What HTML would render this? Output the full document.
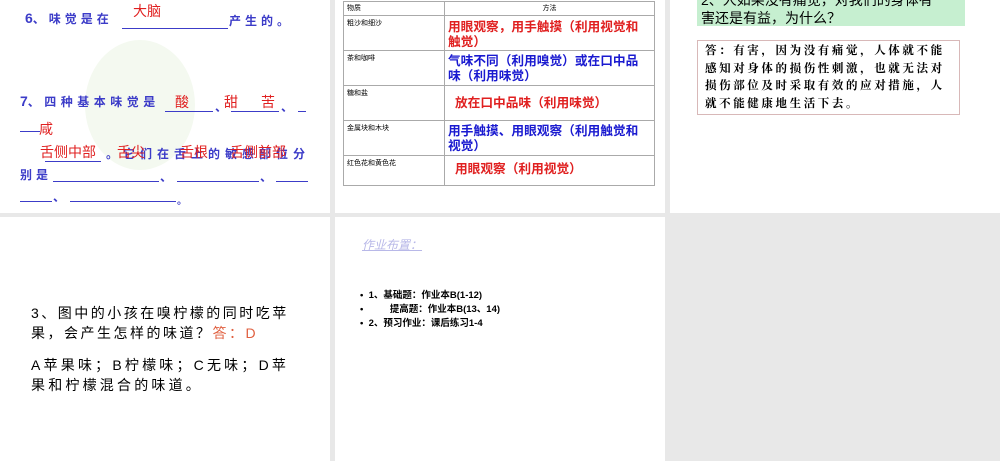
<!DOCTYPE html>
<html><head><meta charset="utf-8"><style>
body{margin:0;width:1000px;height:461px;background:#e8e8e8;position:relative;overflow:hidden;font-family:"Liberation Sans","Noto Sans CJK SC",sans-serif}
.s{position:absolute;background:#fff;overflow:hidden}
.a{position:absolute;white-space:nowrap}
.b{color:#3c3cc8;font-weight:bold;letter-spacing:4px}.r{color:#e02020}
.u{position:absolute;height:1px;background:#3c3cc8}
table{border-collapse:collapse;position:absolute;left:8px;top:1px;width:312px;font-size:7px;table-layout:fixed}
td{border:1px solid #aaa;vertical-align:top;padding:2px 3px;overflow:hidden}
td.m{font-size:12.7px;font-weight:bold;line-height:15px;padding:3px 10px 0 3px}
</style></head><body>
<div class="s" style="left:0;top:0;width:330px;height:213px">
 <div style="position:absolute;left:85px;top:40px;width:110px;height:130px;border-radius:50%;background:#f4f9f0"></div>
 <div class="a b" style="left:25px;top:10px;font-size:14px;letter-spacing:0">6<span style="font-size:12px;letter-spacing:4px">、味觉是在</span></div>
 <div class="u" style="left:122px;top:28px;width:106px"></div>
 <div class="a b" style="left:229px;top:12px;font-size:12px">产生的。</div>
 <div class="a r" style="left:133px;top:1px;font-size:14px">大脑</div>
 <div class="a b" style="left:20px;top:93px;font-size:14px;letter-spacing:0">7<span style="font-size:12px;letter-spacing:4.5px">、四种基本味觉是</span></div>
 <div class="u" style="left:165px;top:111px;width:48px"></div><div class="a b" style="left:215px;top:98px;font-size:12px">、</div>
 <div class="u" style="left:231px;top:111px;width:48px"></div><div class="a b" style="left:281px;top:98px;font-size:12px">、</div>
 <div class="u" style="left:298px;top:111px;width:8px"></div>
 <div class="u" style="left:20px;top:131px;width:20px"></div>
 <div class="a r" style="left:175px;top:92px;font-size:14px">酸</div>
 <div class="a r" style="left:224px;top:92px;font-size:14px">甜</div>
 <div class="a r" style="left:261px;top:92px;font-size:14px">苦</div>
 <div class="a r" style="left:39px;top:119px;font-size:14px">咸</div>
 <div class="a b" style="left:106px;top:145px;font-size:12px;letter-spacing:5px">。它们在舌上的敏感部位分</div>
 <div class="u" style="left:45px;top:161px;width:56px"></div>
 <div class="a r" style="left:40px;top:142px;font-size:14px">舌侧中部</div>
 <div class="a r" style="left:117px;top:142px;font-size:14px">舌尖</div>
 <div class="a r" style="left:180px;top:142px;font-size:14px">舌根</div>
 <div class="a r" style="left:230px;top:142px;font-size:14px">舌侧前部</div>
 <div class="a b" style="left:20px;top:166px;font-size:12px">别是</div>
 <div class="u" style="left:53px;top:181px;width:106px"></div><div class="a b" style="left:160px;top:168px;font-size:12px">、</div>
 <div class="u" style="left:177px;top:181px;width:82px"></div><div class="a b" style="left:260px;top:168px;font-size:12px">、</div>
 <div class="u" style="left:276px;top:181px;width:32px"></div>
 <div class="u" style="left:20px;top:201px;width:32px"></div><div class="a b" style="left:53px;top:188px;font-size:12px">、</div>
 <div class="u" style="left:70px;top:201px;width:106px"></div><div class="a b" style="left:177px;top:192px;font-size:10px">。</div>
</div>
<div class="s" style="left:335px;top:0;width:330px;height:213px">
<table>
<colgroup><col style="width:101px"><col></colgroup>
<tr><td style="height:11px;padding:1px 3px">物质</td><td style="height:11px;padding:1px 3px;text-align:center">方法</td></tr>
<tr><td style="height:28px">粗沙和细沙</td><td class="m r" style="height:30px;padding-top:4px">用眼观察，用手触摸（利用视觉和触觉）</td></tr>
<tr><td>茶和咖啡</td><td class="m" style="color:#1a1ad0;height:31px">气味不同（利用嗅觉）或在口中品味（利用味觉）</td></tr>
<tr><td>糖和盐</td><td class="m r" style="padding-left:10px;padding-top:10px;height:24px">放在口中品味（利用味觉）</td></tr>
<tr><td>金属块和木块</td><td class="m" style="color:#1a1ad0;height:31px">用手触摸、用眼观察（利用触觉和视觉）</td></tr>
<tr><td>红色花和黄色花</td><td class="m r" style="padding-left:10px;padding-top:6px;height:23px">用眼观察（利用视觉）</td></tr>
</table>
</div>
<div class="s" style="left:670px;top:0;width:330px;height:213px">
 <div style="position:absolute;left:27px;top:-3px;width:268px;height:29px;background:#c6efd0"></div>
 <div class="a" style="left:31px;top:-9px;font-size:14px;line-height:18px">2、人如果没有痛觉，对我们的身体有<br>害还是有益，为什么？</div>
 <div style="position:absolute;left:27px;top:40px;width:261px;height:73px;border:1px solid #d8b8b8"></div>
 <div class="a" style="left:35px;top:43px;font-size:11.5px;line-height:17.5px;letter-spacing:2.6px;font-weight:bold;font-family:'Liberation Serif','Noto Serif CJK SC',serif">答：有害，因为没有痛觉，人体就不能<br>感知对身体的损伤性刺激，也就无法对<br>损伤部位及时采取有效的应对措施，人<br>就不能健康地生活下去。</div>
</div>
<div class="s" style="left:0;top:217px;width:330px;height:244px">
 <div class="a" style="left:31px;top:86px;font-size:14px;line-height:20px;letter-spacing:2.5px">3、图中的小孩在嗅柠檬的同时吃苹<br>果，会产生怎样的味道？<span style="color:#e06040">答：D</span></div>
 <div class="a" style="left:31px;top:138px;font-size:14px;line-height:20px;letter-spacing:3.2px">A苹果味；B柠檬味；C无味；D苹<br>果和柠檬混合的味道。</div>
</div>
<div class="s" style="left:335px;top:217px;width:330px;height:244px">
 <div class="a" style="left:27px;top:19px;font-size:12px;color:#b8b8e8;font-style:italic;text-decoration:underline">作业布置：</div>
 <div class="a" style="left:25px;top:72px;font-size:9.5px;line-height:14px;font-weight:bold">•&nbsp; 1、基础题：作业本B(1-12)<br>•&nbsp;&nbsp;&nbsp;&nbsp;&nbsp;&nbsp;&nbsp;&nbsp;&nbsp; 提高题：作业本B(13、14)<br>•&nbsp; 2、预习作业：课后练习1-4</div>
</div>
</body></html>
